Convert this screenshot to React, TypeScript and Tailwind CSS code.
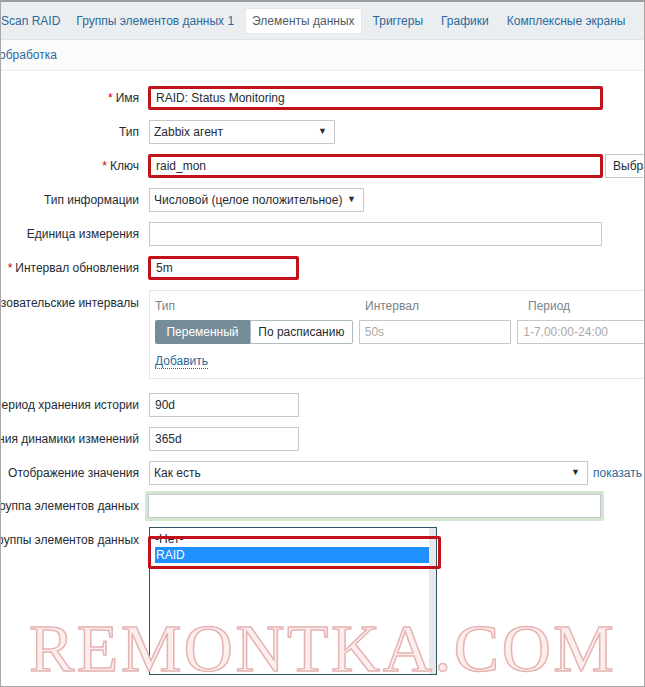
import React from "react";

function Label({ text, req }: { text: string; req?: boolean }) {
  return (
    <div className="w-[138px] shrink-0 flex justify-end overflow-hidden">
      <span className="shrink-0 whitespace-nowrap text-[#1f2c33]">
        {req && <span className="text-[#d40000] mr-[3px]">*</span>}
        {text}
      </span>
    </div>
  );
}

function Row({ label, req, top, children }: { label: string; req?: boolean; top?: boolean; children: React.ReactNode }) {
  return (
    <div className={`flex ${top ? "items-start" : "items-center"} gap-[10px] mb-[10px]`}>
      <div className={top ? "pt-[4px] flex" : "flex"}>
        <Label text={label} req={req} />
      </div>
      {children}
    </div>
  );
}

function Field({ value, w, red, muted }: { value?: string; w: string; red?: boolean; muted?: boolean }) {
  return (
    <div
      className={`${w} h-[24px] flex items-center px-[5px] bg-white whitespace-nowrap ${
        red ? "border-[3px] border-[#c1121b] rounded-[2px] -ml-[1px] px-[3px]" : "border border-[#c3c9cc]"
      } ${muted ? "text-[#a9a9a9]" : "text-[#1f2c33]"}`}
    >
      {value}
    </div>
  );
}

function Select({ value, w }: { value: string; w: string }) {
  return (
    <div className={`${w} h-[24px] flex items-center justify-between px-[4px] border border-[#c3c9cc] bg-white text-[#1f2c33] whitespace-nowrap`}>
      <span>{value}</span>
      <span className="text-[9px] mr-[3px]">▼</span>
    </div>
  );
}

export default function App() {
  const tabs = ["Группы элементов данных 1", "Элементы данных", "Триггеры", "Графики", "Комплексные экраны"];
  return (
    <div className="relative w-[645px] h-[687px] overflow-hidden bg-white border border-[#a7a7a7] border-t-[2px] border-t-[#9d9d9d] font-['Liberation_Sans',Arial,sans-serif] text-[12px]">
      {/* tabs */}
      <div className="h-[38px] bg-[#ebeef0] border-b border-[#dde3e6] flex items-center whitespace-nowrap">
        <span className="pr-[7px] text-[#2b6a9c]">Scan RAID</span>
        {tabs.map((t) => (
          <span
            key={t}
            className={
              t === "Элементы данных"
                ? "ml-[2px] mr-[2px] px-[6px] py-[3px] bg-white border border-[#e4e8ea] text-[#4f5d66]"
                : "px-[9px] text-[#2b6a9c]"
            }
          >
            {t}
          </span>
        ))}
      </div>
      {/* sub tab */}
      <div className="h-[31px] bg-[#fbfbfb] border-b border-[#e8ecee] flex items-center">
        <span className="-ml-[2px] text-[#2b6a9c]">обработка</span>
      </div>

      {/* form */}
      <div className="pt-[15px]">
        <Row label="Имя" req>
          <Field value="RAID: Status Monitoring" w="w-[455px]" red />
        </Row>
        <Row label="Тип">
          <Select value="Zabbix агент" w="w-[186px]" />
        </Row>
        <Row label="Ключ" req>
          <div className="flex items-center gap-[2px]">
            <Field value="raid_mon" w="w-[455px]" red />
            <div className="h-[24px] px-[7px] flex items-center border border-[#c3c9cc] bg-white text-[#1f2c33] whitespace-nowrap">
              Выбрать
            </div>
          </div>
        </Row>
        <Row label="Тип информации">
          <Select value="Числовой (целое положительное)" w="w-[215px]" />
        </Row>
        <Row label="Единица измерения">
          <Field w="w-[453px]" />
        </Row>
        <Row label="Интервал обновления" req>
          <Field value="5m" w="w-[151px]" red />
        </Row>
        <Row label="Пользовательские интервалы" top>
          <div className="w-[520px] shrink-0 border border-[#e3e7e9] px-[5px] pt-[6px] pb-[8px] text-[#1f2c33]">
            <div className="flex text-[#7a8387] mb-[5px]">
              <span className="w-[210px]">Тип</span>
              <span className="w-[163px]">Интервал</span>
              <span>Период</span>
            </div>
            <div className="flex items-center gap-[6px] whitespace-nowrap">
              <div className="flex h-[24px] w-[204px]">
                <span className="w-[95px] flex items-center justify-center bg-[#768d99] text-white rounded-l-[2px]">Переменный</span>
                <span className="flex-1 flex items-center justify-center border border-[#acbbc2] rounded-r-[2px]">По расписанию</span>
              </div>
              <Field value="50s" w="w-[157px]" muted />
              <Field value="1-7,00:00-24:00" w="w-[150px]" muted />
            </div>
            <div className="mt-[8px]">
              <span className="text-[#2b6a9c] border-b border-dotted border-[#2b6a9c]">Добавить</span>
            </div>
          </div>
        </Row>
        <div className="h-[4px]" />
        <Row label="Период хранения истории">
          <Field value="90d" w="w-[150px]" />
        </Row>
        <Row label="Период хранения динамики изменений">
          <Field value="365d" w="w-[150px]" />
        </Row>
        <Row label="Отображение значения">
          <div className="flex items-center gap-[5px]">
            <Select value="Как есть" w="w-[439px]" />
            <span className="text-[#2b6a9c]">показать</span>
          </div>
        </Row>
        <Row label="Новая группа элементов данных">
          <div className="-m-[4px] p-[3px] bg-[#d2e6d2] rounded-[2px]">
            <Field w="w-[453px]" />
          </div>
        </Row>
        <Row label="Группы элементов данных" top>
          <div className="relative w-[288px] h-[148px] shrink-0 border border-[#2e5566] bg-white text-[#1f2c33]">
            <div className="absolute right-0 top-0 bottom-0 w-[7px] bg-[#e8e8e8]" />
            <div className="pl-[5px] pt-[3px] leading-[16px]">-Нет-</div>
            <div className="ml-[5px] mr-[2px] bg-[#1e90ff] text-white leading-[16px] pl-[1px]">RAID</div>
            <div className="absolute left-[-2px] top-[8px] w-[293px] h-[33px] border-[3px] border-[#c1121b] rounded-[2px]" />
          </div>
        </Row>
      </div>

      {/* watermark */}
      <div className="absolute left-[28px] top-[612px] pointer-events-none font-['Liberation_Serif',serif] text-[68px] leading-none tracking-[2.5px] text-[#fdeeee] [-webkit-text-stroke:1.5px_#e6b3b3]">
        REMONTKA.COM
      </div>
    </div>
  );
}
